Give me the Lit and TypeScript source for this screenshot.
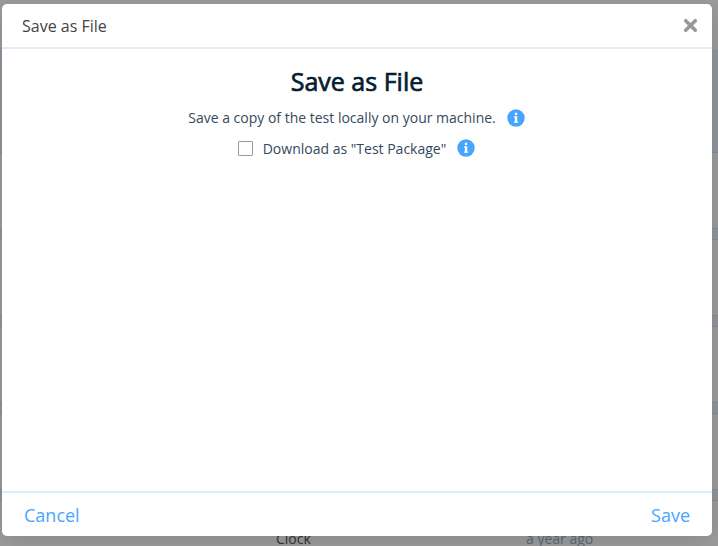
import { LitElement, html, css } from "lit";
import { customElement } from "lit/decorators.js";

@customElement("info-icon")
class InfoIcon extends LitElement {
  static styles = css`
    :host { display: block; width: 18px; height: 18px; flex: none; }
    svg { display: block; }
  `;
  render() {
    return html`<svg width="18" height="18" viewBox="0 0 18 18">
      <circle cx="9" cy="9" r="8.7" fill="#47a5ff" />
      <path fill="#fff" d="M7.9 3.7h2.3v2.2H7.9zM7 7.2h3.2v5.2h.9v1.3H7v-1.3h.9V8.5H7z" />
    </svg>`;
  }
}

@customElement("app-root")
class AppRoot extends LitElement {
  static styles = css`
    :host {
      display: grid;
      width: 718px;
      height: 546px;
      overflow: hidden;
      font-family: "Open Sans", "Noto Sans", sans-serif;
      background: #91979d;
    }
    .backdrop, .dialog { grid-area: 1 / 1; }
    .backdrop { display: flex; flex-direction: column; min-height: 0; height: 546px; overflow: hidden; }
    .bar { flex: none; height: 49px; background: #9c9c9c; }
    .intro { flex: none; height: 103px; }
    .row {
      flex: none;
      box-sizing: border-box;
      height: 77px;
      margin-bottom: 10px;
      border-top: 1px solid #868d95;
      border-bottom: 1px solid #868d95;
      background: #9c9c9c;
      display: grid;
      grid-template-columns: 276px 250px 1fr;
      align-items: center;
      font-size: 14px;
      line-height: 20px;
      color: #333;
    }
    .age { color: #596a7c; }
    .dialog {
      margin: 4px 6px 10px 2px;
      background: #fff;
      border-radius: 5px;
      box-shadow: 0 4px 24px rgba(0, 0, 0, 0.14);
      display: flex;
      flex-direction: column;
      z-index: 1;
    }
    .header {
      box-sizing: border-box;
      height: 45px;
      border-bottom: 2px solid #e0ecf8;
      padding: 0 14px 0 20px;
      display: flex;
      align-items: center;
      justify-content: space-between;
      font-size: 16px;
      color: #444;
    }
    .content { flex: 1; display: flex; flex-direction: column; align-items: center; color: #35495c; }
    .heading {
      margin: 14px 0 0;
      font-size: 25px;
      line-height: 36px;
      font-weight: 400;
      color: #061e30;
      -webkit-text-stroke: 0.7px #061e30;
    }
    .line { display: flex; align-items: center; font-size: 14px; line-height: 20px; }
    .copy { margin: 9px 1px 0 0; gap: 11px; }
    .option { margin: 10px 1px 0 0; gap: 11px; }
    .label { margin: 1px 0 -1px; }
    .check { box-sizing: border-box; width: 15px; height: 15px; border: 1px solid #999; border-radius: 1px; margin-right: -1px; }
    .footer {
      box-sizing: border-box;
      height: 45px;
      border-top: 2px solid #e0eef8;
      padding: 0 22px;
      display: flex;
      align-items: center;
      justify-content: space-between;
      font-size: 18px;
      color: #47a5ff;
    }
  `;

  render() {
    return html`
      <div class="backdrop">
        <div class="bar"></div>
        <div class="intro"></div>
        ${[0, 1, 2, 3].map(() => html`<div class="row"></div>`)}
        <div class="row"><span></span><span>Clock</span><span class="age">a year ago</span></div>
      </div>
      <div class="dialog">
        <div class="header">
          <span>Save as File</span>
          <svg width="15" height="15" viewBox="0 0 15 15">
            <path d="M2.7 2.7 12.3 12.3M12.3 2.7 2.7 12.3" stroke="#999" stroke-width="3.6" stroke-linecap="round" />
          </svg>
        </div>
        <div class="content">
          <h1 class="heading">Save as File</h1>
          <div class="line copy"><span>Save a copy of the test locally on your machine.</span><info-icon></info-icon></div>
          <div class="line option">
            <span class="check"></span><span class="label">Download as "Test Package"</span><info-icon></info-icon>
          </div>
        </div>
        <div class="footer"><span>Cancel</span><span>Save</span></div>
      </div>
    `;
  }
}
